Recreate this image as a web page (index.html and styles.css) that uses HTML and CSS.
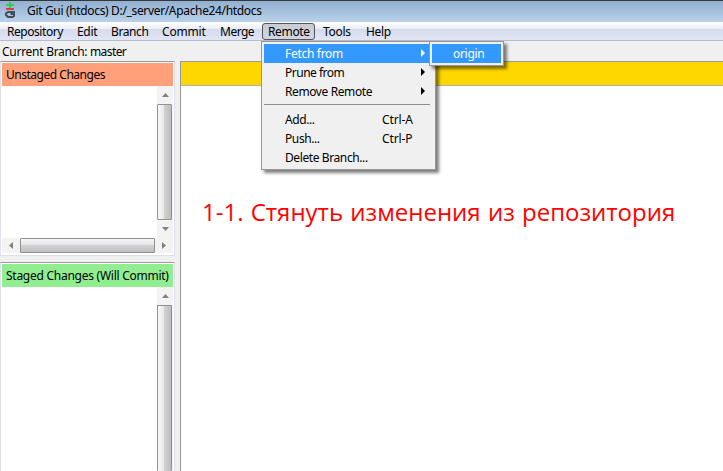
FILE: index.html
```html
<!DOCTYPE html>
<html lang="en">
<head>
<meta charset="utf-8">
<title>Git Gui (htdocs) D:/_server/Apache24/htdocs</title>
<link rel="stylesheet" href="styles.css">
</head>
<body>
<div class="window">
  <header class="titlebar">
    <svg class="logo" width="12" height="18" viewBox="0 0 12 18">
      <path d="M5 1h2v6H5zM2 3h8v2H2z" fill="#2fd04a"/>
      <path d="M2 7h8v2H2z" fill="#e43b43"/>
      <path d="M11 11H4L2 12.500v1.500L4 16h4.500l1.500-1v-2H6.500" fill="none" stroke="#444c55" stroke-width="2"/>
    </svg>
    <span class="title">Git Gui (htdocs) D:/_server/Apache24/htdocs</span>
  </header>
  <nav class="menubar">
    <span class="item repository">Repository</span>
    <span class="item edit">Edit</span>
    <span class="item branch">Branch</span>
    <span class="item commit">Commit</span>
    <span class="item merge">Merge</span>
    <span class="item remote open">Remote</span>
    <span class="item tools">Tools</span>
    <span class="item help">Help</span>
  </nav>
  <div class="status"><span class="status-label">Current Branch:</span><span class="status-value">master</span></div>
  <main class="body">
    <aside class="side">
      <section class="panel unstaged">
        <h2 class="head">Unstaged Changes</h2>
        <div class="list">
          <div class="files"></div>
          <div class="vbar">
            <span class="btn"><svg width="7" height="4"><path d="M0 4L3.500 0L7 4z"/></svg></span>
            <span class="thumb"></span>
            <span class="btn"><svg width="7" height="4"><path d="M0 0L3.500 4L7 0z"/></svg></span>
          </div>
        </div>
        <div class="hbar">
          <span class="btn"><svg width="4" height="7"><path d="M4 0L0 3.500L4 7z"/></svg></span>
          <span class="thumb"></span>
          <span class="btn"><svg width="4" height="7"><path d="M0 0L4 3.500L0 7z"/></svg></span>
        </div>
      </section>
      <section class="panel staged">
        <h2 class="head">Staged Changes (Will Commit)</h2>
        <div class="list">
          <div class="files"></div>
          <div class="vbar">
            <span class="btn"><svg width="7" height="4"><path d="M0 4L3.500 0L7 4z"/></svg></span>
            <span class="thumb cut"></span>
          </div>
        </div>
      </section>
    </aside>
    <section class="diff">
      <div class="diff-head"></div>
      <p class="note">1-1. Стянуть изменения из репозитория</p>
    </section>
  </main>
  <div class="menu">
    <div class="row active"><span class="fetch">Fetch from</span><svg class="arrow" width="4" height="8"><path d="M0 0L4 4L0 8z"/></svg></div>
    <div class="row"><span class="prune">Prune from</span><svg class="arrow" width="4" height="8"><path d="M0 0L4 4L0 8z"/></svg></div>
    <div class="row"><span class="remove">Remove Remote</span><svg class="arrow" width="4" height="8"><path d="M0 0L4 4L0 8z"/></svg></div>
    <div class="sep"></div>
    <div class="row"><span class="add">Add...</span><span class="key">Ctrl-A</span></div>
    <div class="row"><span class="push">Push...</span><span class="key">Ctrl-P</span></div>
    <div class="row"><span class="delete">Delete Branch...</span></div>
  </div>
  <div class="menu submenu">
    <div class="row active"><span class="origin">origin</span></div>
  </div>
</div>
</body>
</html>
```
FILE: styles.css
```css
* { box-sizing: border-box; }
body { margin: 0; font: 12px/18px "Noto Sans", "Open Sans", sans-serif; color: #000; }
.window { position: relative; width: 723px; height: 471px; overflow: hidden; background: #f0f0f0; display: flex; flex-direction: column; white-space: nowrap; }
.titlebar { height: 22px; flex: none; display: flex; border-top: 1px solid #33363b; background: linear-gradient(#93b0d0, #b9d1ea); padding-left: 4px; }
.logo { flex: none; margin-right: 11px; }
.title { line-height: 20px; letter-spacing: -0.34px; }
.menubar { height: 19px; flex: none; display: flex; padding-left: 1px; border-bottom: 1px solid #b6bccc; background: linear-gradient(#fff 0, #e9edf6 7px, #d5dbed 7px, #e1e6f6 18px); }
.item { flex: none; padding-left: 6px; line-height: 19px; height: 18px; letter-spacing: -0.3px; }
.repository { width: 70px; letter-spacing: -0.45px; }
.edit { width: 34px; }
.branch { width: 51px; letter-spacing: -0.4px; }
.commit { width: 58px; letter-spacing: -0.2px; }
.merge { width: 48px; letter-spacing: -0.5px; }
.remote { width: 53px; }
.tools { width: 45px; padding-left: 8px; }
.help { width: 40px; }
.open { border: 1px solid #50555f; border-radius: 3px; background: linear-gradient(#c9cbd2, #d2d5e2); padding-left: 5px; line-height: 15px; margin-top: 1px; height: 17px; letter-spacing: -0.35px; }
.status { height: 20px; flex: none; padding-left: 2px; line-height: 22px; display: flex; letter-spacing: -0.27px; }
.status-label { width: 88px; }
.status-value { letter-spacing: -0.6px; }
.body { flex: 1; min-height: 0; display: flex; gap: 5px; }
.side { width: 175px; display: flex; flex-direction: column; gap: 6px; }
.panel { display: flex; flex-direction: column; border: 1px solid #dfe0ec; border-top-color: #9b9ca2; padding: 1px; background: #fff; }
.unstaged { height: 195px; flex: none; }
.staged { flex: 1; border-bottom: 0; padding-bottom: 0; }
.head { margin: 0; height: 23px; flex: none; padding-left: 4px; font-size: 12px; font-weight: 400; line-height: 24px; background: #ffa07a; letter-spacing: -0.48px; }
.staged .head { background: #90ee90; letter-spacing: -0.26px; }
.list { flex: 1; display: flex; min-height: 0; }
.files { flex: 1; }
.vbar { width: 16px; display: flex; flex-direction: column; background: #f3f3f3; }
.hbar { height: 15px; margin-bottom: 1px; display: flex; background: #f3f3f3; }
.btn { flex: none; width: 18px; display: flex; align-items: center; justify-content: center; fill: #808080; }
.vbar .btn { width: 16px; height: 18px; }
.thumb { flex: 1; border: 1px solid #919191; border-radius: 1px; }
.vbar .thumb { width: 15px; background: linear-gradient(90deg, #f8f8f8, #e8e8e8 45%, #d1d1d3 50%, #bcbcc0); }
.hbar .thumb { background: linear-gradient(#f6f6f6, #e6e6e8 45%, #d2d2d5 50%, #c0c0c4); }
.thumb.cut { border-bottom: 0; }
.diff { flex: 1; border-top: 1px solid #9b9ca2; border-left: 1px solid #96969c; background: #fff; }
.diff-head { height: 24px; background: #ffd700; border-bottom: 1px solid #b0b0b0; }
.note { margin: 108px 0 0 21px; font: 24px/36px "Open Sans", "Noto Sans", sans-serif; color: #f00; letter-spacing: 0; word-spacing: 1px; }
.menu { position: absolute; left: 261px; top: 41px; width: 175px; height: 129px; padding: 2px; background: #f0f0f0; border: 1px solid #979797; box-shadow: 3px 3px 3px rgba(0,0,0,.5); letter-spacing: -0.4px; }
.row { display: flex; align-items: center; height: 19px; padding: 0 8px 0 21px; line-height: 20px; }
.active { background: #3399ff; color: #fff; }
.prune { letter-spacing: -0.5px; }
.fetch { letter-spacing: -0.3px; }
.arrow { margin-left: auto; fill: #000; margin-top: -2px; }
.active .arrow { fill: #fff; }
.key { margin-left: auto; width: 43px; letter-spacing: -0.1px; }
.sep { height: 1px; background: #909090; margin: 3px 3px 5px 0; }
.submenu { left: 429px; top: 41px; width: 75px; height: 25px; }
.origin { letter-spacing: -0.3px; }
```
